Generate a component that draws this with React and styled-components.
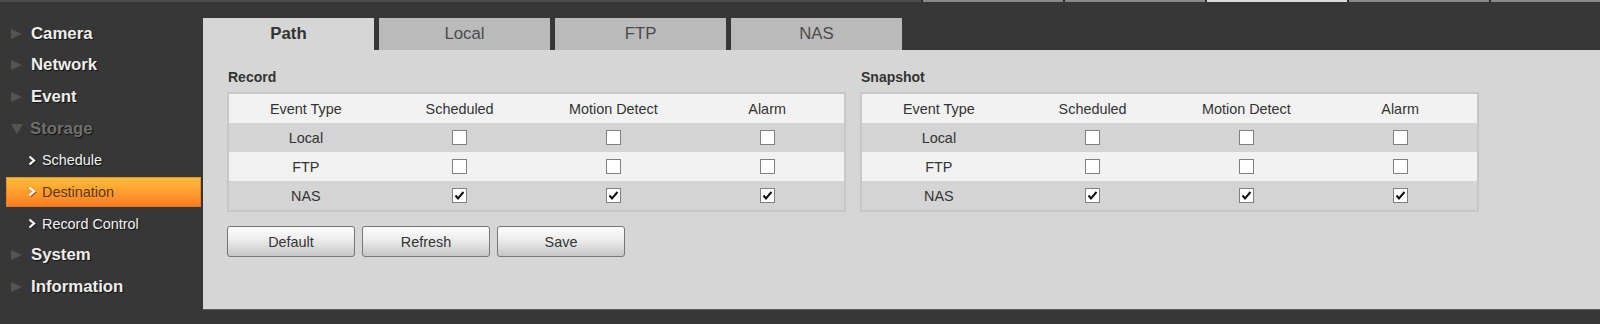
import React from 'react';
import styled, { createGlobalStyle } from 'styled-components';

const GlobalStyle = createGlobalStyle`
    body {
        margin: 0;
        background: #373737;
        font-family: "Liberation Sans", Arial, sans-serif;
    }
`;

const menu = [
    { label: 'Camera', type: 'main' },
    { label: 'Network', type: 'main' },
    { label: 'Event', type: 'main' },
    { label: 'Storage', type: 'main', open: true },
    { label: 'Schedule', type: 'sub' },
    { label: 'Destination', type: 'sub', active: true },
    { label: 'Record Control', type: 'sub' },
    { label: 'System', type: 'main' },
    { label: 'Information', type: 'main' },
];

const tabs = ['Path', 'Local', 'FTP', 'NAS'];
const columns = ['Event Type', 'Scheduled', 'Motion Detect', 'Alarm'];
const rows = [
    { name: 'Local', checked: false },
    { name: 'FTP', checked: false },
    { name: 'NAS', checked: true },
];

const App = () => (
    <>
        <GlobalStyle />
        <Frame>
            <TopStrip>
                <StripLead />
                <StripTab />
                <StripTab />
                <StripTab $lit />
                <StripTab />
                <StripTab $last />
            </TopStrip>
            <Body>
                <Sidebar>
                    {menu.map((item) =>
                        item.type === 'main' ? (
                            <MainItem key={item.label} $open={item.open}>
                                <Arrow $open={item.open} />
                                {item.label}
                            </MainItem>
                        ) : (
                            <SubItem key={item.label} $active={item.active}>
                                <svg width="8" height="11" viewBox="0 0 8 11">
                                    <polyline points="1.5,1.5 6,5.5 1.5,9.5" fill="none" stroke="#fff" strokeWidth="2.2" />
                                </svg>
                                <span>{item.label}</span>
                            </SubItem>
                        )
                    )}
                </Sidebar>
                <Main>
                    <TabBar>
                        {tabs.map((t, i) => (
                            <Tab key={t} $active={i === 0}>{t}</Tab>
                        ))}
                    </TabBar>
                    <Panel>
                        <Sections>
                            {['Record', 'Snapshot'].map((title) => (
                                <Section key={title}>
                                    <SectionLabel>{title}</SectionLabel>
                                    <Table>
                                        <Row $light>
                                            {columns.map((c) => (
                                                <Cell key={c}>{c}</Cell>
                                            ))}
                                        </Row>
                                        {rows.map((r, i) => (
                                            <Row key={r.name} $light={i % 2 === 1}>
                                                <Cell>{r.name}</Cell>
                                                {[0, 1, 2].map((k) => (
                                                    <Cell key={k}>
                                                        <CheckBox>
                                                            {r.checked && (
                                                                <svg width="13" height="13" viewBox="0 0 13 13">
                                                                    <polyline points="2.5,6.5 5,9.5 10.5,3" fill="none" stroke="#111" strokeWidth="2" />
                                                                </svg>
                                                            )}
                                                        </CheckBox>
                                                    </Cell>
                                                ))}
                                            </Row>
                                        ))}
                                    </Table>
                                </Section>
                            ))}
                        </Sections>
                        <Buttons>
                            <Button>Default</Button>
                            <Button>Refresh</Button>
                            <Button>Save</Button>
                        </Buttons>
                    </Panel>
                </Main>
            </Body>
        </Frame>
    </>
);

const Frame = styled.div`
    width: 1600px;
    height: 324px;
    background: #373737;
    display: flex;
    flex-direction: column;
    overflow: hidden;
`;

const TopStrip = styled.div`
    height: 2px;
    display: flex;
    gap: 2px;
    background: #2f2f2f;
`;

const StripLead = styled.div`
    width: 921px;
    background: #4c4c4c;
`;

const StripTab = styled.div`
    width: 140px;
    flex: ${(p) => (p.$last ? '1' : 'none')};
    background: ${(p) => (p.$lit ? '#dcdcdc' : '#8a8a8a')};
`;

const Body = styled.div`
    flex: 1;
    display: flex;
`;

const Sidebar = styled.div`
    width: 203px;
    flex: none;
    padding-top: 16.5px;
    display: flex;
    flex-direction: column;
    gap: 1.7px;
`;

const MainItem = styled.div`
    height: 30px;
    display: flex;
    align-items: center;
    padding-left: 11px;
    gap: 9px;
    font-size: 16.8px;
    font-weight: bold;
    color: ${(p) => (p.$open ? '#707070' : '#eeeeee')};
    text-shadow: 1px 1px 1px #111;
`;

const Arrow = styled.span`
    width: 0;
    height: 0;
    ${(p) =>
        p.$open
            ? `
        border-left: 6.5px solid transparent;
        border-right: 6.5px solid transparent;
        border-top: 10px solid #55554f;
        margin-right: -2px;
    `
            : `
        border-top: 5.5px solid transparent;
        border-bottom: 5.5px solid transparent;
        border-left: 11px solid #55554f;
    `}
`;

const SubItem = styled.div`
    height: 30px;
    margin: 0 2px 0 6px;
    display: flex;
    align-items: center;
    gap: 6px;
    padding-left: 22px;
    font-size: 14.4px;
    color: ${(p) => (p.$active ? '#563a1e' : '#f2f2f2')};
    text-shadow: ${(p) => (p.$active ? 'none' : '1px 1px 1px #111')};
    background: ${(p) => (p.$active ? 'linear-gradient(#ffbf3c, #ff7b22)' : 'transparent')};
    box-shadow: ${(p) => (p.$active ? 'inset 0 0 0 1px rgba(210,110,20,0.5)' : 'none')};

    svg {
        filter: drop-shadow(1px 1px 0 rgba(0, 0, 0, 0.4));
    }
`;

const Main = styled.div`
    flex: 1;
    display: flex;
    flex-direction: column;
    padding-top: 16px;
`;

const TabBar = styled.div`
    display: flex;
    gap: 5px;
    height: 32px;
`;

const Tab = styled.div`
    width: 171px;
    display: flex;
    align-items: center;
    justify-content: center;
    font-size: 16.8px;
    font-weight: ${(p) => (p.$active ? 'bold' : 'normal')};
    color: ${(p) => (p.$active ? '#333' : '#4a4a4a')};
    background: ${(p) => (p.$active ? '#d6d6d6' : '#bababa')};
`;

const Panel = styled.div`
    height: 260px;
    background: #d6d6d6;
    border-bottom: 1px solid #5c5c5c;
    padding: 16px 0 0 24px;
    box-sizing: border-box;
`;

const Sections = styled.div`
    display: flex;
    gap: 14px;
`;

const Section = styled.div`
    display: flex;
    flex-direction: column;
`;

const SectionLabel = styled.div`
    font-size: 14px;
    font-weight: bold;
    color: #333;
    line-height: 22px;
    margin-bottom: 4px;
    padding-left: 1px;
`;

const Table = styled.div`
    width: 619px;
    border: 2px solid #c7c7c7;
    box-sizing: border-box;
`;

const Row = styled.div`
    display: grid;
    grid-template-columns: repeat(4, 1fr);
    height: 29px;
    background: ${(p) => (p.$light ? '#f2f2f2' : '#d4d4d4')};
`;

const Cell = styled.div`
    display: flex;
    align-items: center;
    justify-content: center;
    font-size: 14.4px;
    color: #333;
`;

const CheckBox = styled.span`
    width: 13px;
    height: 13px;
    border: 1px solid #808080;
    background: #fff;
    display: flex;
    align-items: center;
    justify-content: center;
`;

const Buttons = styled.div`
    display: flex;
    gap: 7px;
    margin-top: 14px;
`;

const Button = styled.button`
    width: 128px;
    height: 31px;
    border: 1px solid #777;
    border-radius: 3px;
    background: linear-gradient(#fdfdfd, #ececec 45%, #c6c6c6);
    font-family: "Liberation Sans", Arial, sans-serif;
    font-size: 14.4px;
    color: #333;
    padding: 0;
`;

export default App;
